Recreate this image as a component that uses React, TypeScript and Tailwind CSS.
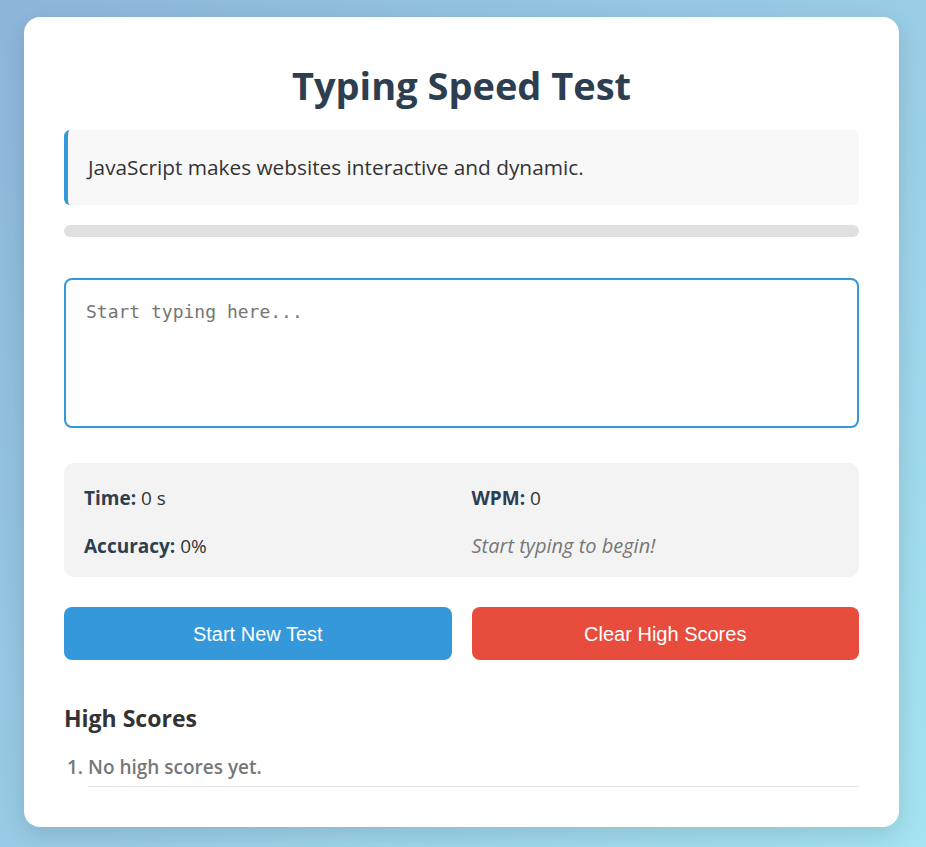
import React from "react";

const sans = "font-['Open_Sans',sans-serif]";

export default function App() {
  return (
    <div className="min-h-[847px] w-full bg-[linear-gradient(135deg,#8cb5da_0%,#a5e3f1_100%)] pt-[17px] pb-[20px]">
      <div
        className={`ml-[24px] w-[875px] rounded-[16px] bg-white px-[40px] pt-[39px] pb-[40px] shadow-[0_8px_24px_rgba(0,0,0,0.12)] ${sans}`}
      >
        <h1 className="text-center text-[38px] leading-[58px] font-bold text-[#2c3e50]">
          Typing Speed Test
        </h1>

        <div className="mt-[16px] flex h-[75px] items-center rounded-[6px] border-l-4 border-[#3498db] bg-[#f8f8f8] px-[20px]">
          <p className="text-[20.8px] text-[#333]">
            JavaScript makes websites interactive and dynamic.
          </p>
        </div>

        <div className="mt-[20px] h-[12px] w-full rounded-full bg-[#e0e0e0]" />

        <textarea
          autoFocus
          placeholder="Start typing here..."
          className="mt-[41px] block h-[150px] w-full resize-none rounded-[8px] border-2 border-[#3498db] px-[20px] py-[20px] font-['DejaVu_Sans_Mono',monospace] text-[18px] leading-[24px] text-[#333] outline-none placeholder:text-[#757575]"
        />

        <div className="mt-[35px] grid h-[114px] grid-cols-2 content-start gap-x-[20px] gap-y-[20px] rounded-[10px] bg-[#f3f3f3] px-[20px] pt-[21px]">
          <div className="text-[19px] leading-[28px] text-[#333]">
            <span className="font-bold text-[#2c3e50]">Time:</span> 0 s
          </div>
          <div className="text-[19px] leading-[28px] text-[#333]">
            <span className="font-bold text-[#2c3e50]">WPM:</span> 0
          </div>
          <div className="text-[19px] leading-[28px] text-[#333]">
            <span className="font-bold text-[#2c3e50]">Accuracy:</span> 0%
          </div>
          <div className="text-[20px] leading-[28px] italic text-[#777]">
            Start typing to begin!
          </div>
        </div>

        <div className="mt-[30px] grid grid-cols-2 gap-[20px] font-['Liberation_Sans',sans-serif]">
          <button className="h-[53px] rounded-[8px] bg-[#3498db] text-[20px] text-white">
            Start New Test
          </button>
          <button className="h-[53px] rounded-[8px] bg-[#e74c3c] text-[20px] text-white">
            Clear High Scores
          </button>
        </div>

        <h2 className="mt-[42px] text-[23px] leading-[32px] font-bold text-[#333]">
          High Scores
        </h2>
        <ol className="mt-[20px] list-decimal pl-[24px] text-[19px] font-semibold text-[#777]">
          <li className="border-b border-[#e5e5e5] pb-[6px] leading-[26px]">
            No high scores yet.
          </li>
        </ol>
      </div>
    </div>
  );
}
